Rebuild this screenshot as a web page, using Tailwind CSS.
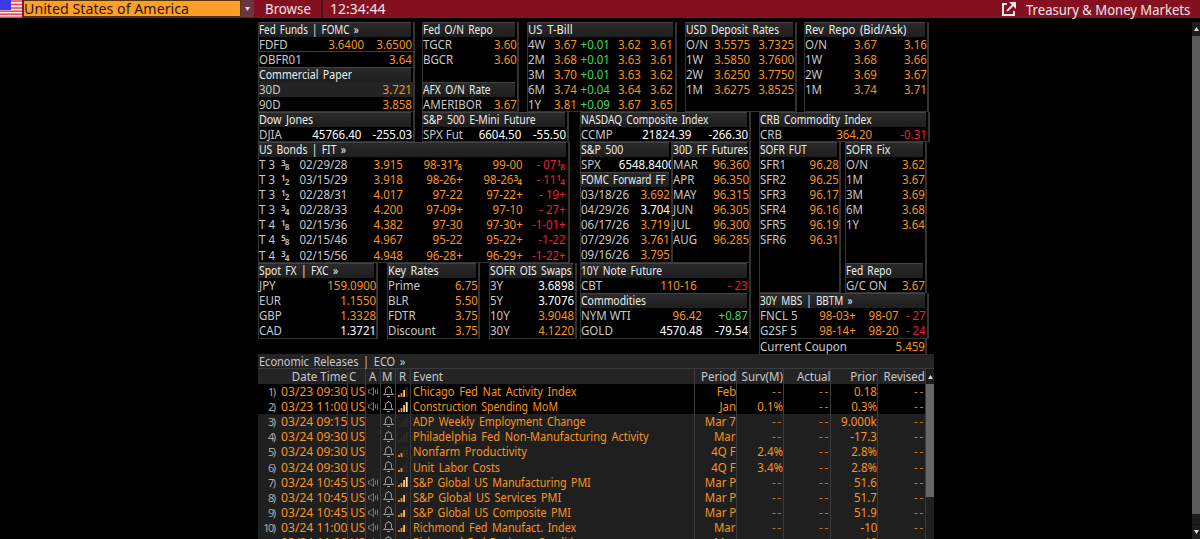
<!DOCTYPE html>
<html lang="en">
<head>
    <meta charset="UTF-8">
    <meta name="viewport" content="width=device-width, initial-scale=1.0">
    <title>Treasury &amp; Money Markets</title>
    <script src="https://cdn.jsdelivr.net/npm/@tailwindcss/browser@4"></script>
</head>
<body class="h-[539px] overflow-hidden bg-black font-['Noto_Sans','DejaVu_Sans',sans-serif] text-[12.5px] text-[#c9c9c9]">

    <!-- TOP BAR -->
    <header class="flex h-[18px] w-full items-stretch bg-[#85101f] text-[15px] leading-[17px] text-[#f0e4e6]">
        <svg class="h-[18px] w-[22px] shrink-0" viewBox="0 0 22 18" aria-hidden="true">
            <rect width="22" height="18" fill="#f3e3e3" />
            <path d="M0 1h22M0 4.5h22M0 8h22M0 11.2h22M0 14.2h22M0 17.2h22" stroke="#e0485a" stroke-width="1.4" />
            <rect width="11" height="10" fill="#3a3ae6" />
        </svg>
        <div class="ml-px flex h-[17px] w-[218px] shrink-0 items-center border border-[#5a3208] bg-[#ff9f29] text-[#2a1a04]">
            <span class="inline-block shrink-0 origin-left whitespace-nowrap" data-fit="165">United States of America</span>
        </div>
        <button class="flex h-[17px] w-[13px] shrink-0 items-center justify-center bg-[#6c3640]">
            <svg class="h-1 w-[5px]" viewBox="0 0 5 4"><path d="M0 0h5L2.500 4z" fill="#ddd" /></svg>
        </button>
        <div class="w-[69px] shrink-0 border-r-2 border-[#4d0a13] pl-[11px]"><span class="inline-block origin-left whitespace-nowrap" data-fit="46">Browse</span></div>
        <div class="pl-[7px]"><span class="inline-block origin-left whitespace-nowrap" data-fit="56">12:34:44</span></div>
        <div class="ml-auto flex w-[198px] shrink-0 items-center">
            <svg class="mr-[10px] h-[14px] w-[14px] shrink-0" viewBox="0 0 14 14" fill="none" stroke="#f0e4e6" stroke-width="2">
                <path d="M5 2H1v11h11V9" /><path d="M5 9l6-6" /><path d="M7 0h7v7z" fill="#f0e4e6" stroke="none" />
            </svg>
            <span class="inline-block shrink-0 origin-left whitespace-nowrap" data-fit="164">Treasury &amp; Money Markets</span>
        </div>
    </header>

    <div class="flex">
        <main class="ml-[258px] mt-1 w-[676px]">
            <!-- MONEY MARKET PANELS -->
            <div class="flex h-[90px]">
                <div class="mr-[7px] w-[157px]" id="fed-funds"></div>
                <div class="mr-2 w-[97px]" id="repo"></div>
                <div class="mr-2 w-[150px]" id="bills"></div>
                <div class="mr-[7px] w-[112px]" id="deposits"></div>
                <div class="w-[125px]" id="rev-repo"></div>
            </div>
            <div class="flex h-[242px]">
                <div class="mr-[3px] w-[319px]">
                    <div class="flex h-[30px]">
                        <div class="mr-[7px] w-[157px]" id="dow"></div>
                        <div class="w-[147px]" id="emini"></div>
                    </div>
                    <div class="h-[121px] w-[312px]" id="bonds"></div>
                    <div class="flex">
                        <div class="mr-[9px] w-[120px]" id="fx"></div>
                        <div class="mr-[9px] w-[93px]" id="key-rates"></div>
                        <div class="w-[88px]" id="swaps"></div>
                    </div>
                </div>
                <div class="mr-2 w-[171px]">
                    <div class="h-[30px]" id="nasdaq"></div>
                    <div class="flex h-[121px]">
                        <div class="w-[92px] overflow-hidden" id="spx"></div>
                        <div class="w-[79px]" id="futures"></div>
                    </div>
                    <div id="note"></div>
                </div>
                <div class="w-[171px]">
                    <div class="h-[30px]" id="crb"></div>
                    <div class="flex h-[151px]">
                        <div class="mr-[4px] w-[82px]" id="sofr-fut"></div>
                        <div class="w-[82px]" id="sofr-fix"></div>
                    </div>
                    <div class="w-[170px]" id="mbs"></div>
                    <div class="w-[168px]" id="coupon"></div>
                </div>
            </div>

            <!-- ECONOMIC RELEASES -->
            <section class="h-[185px] overflow-hidden bg-[#1f1f1f]">
                <div class="h-[15px] border-b border-[#3a3a3a] bg-[#242424] pl-px leading-[15px]"><span class="inline-block origin-left whitespace-nowrap [word-spacing:2px]" data-fit="146">Economic Releases | ECO »</span></div>
                <div class="flex">
                    <div class="w-[668px]" id="releases"></div>
                    <div class="w-2">
                        <div class="flex h-[15px] items-center justify-center bg-[#1c1c1c]"><svg class="h-1 w-[5px]" viewBox="0 0 5 4"><path d="M0 4h5L2.500 0z" fill="#ddd" /></svg></div>
                        <div class="h-[113px] bg-[#666]"></div>
                    </div>
                </div>
            </section>
        </main>

        <!-- PAGE SCROLLBAR -->
        <div class="ml-auto mt-1 h-[517px] w-2 bg-[#1c1c1c]">
            <div class="flex h-[14px] items-center justify-center"><svg class="h-1 w-[5px]" viewBox="0 0 5 4"><path d="M0 4h5L2.500 0z" fill="#ddd" /></svg></div>
            <div class="h-[478px] bg-[#5a5a5a]"></div>
            <div class="mt-[10px] flex h-[14px] items-center justify-center border-t border-[#111]"><svg class="h-1 w-[5px]" viewBox="0 0 5 4"><path d="M0 0h5L2.500 4z" fill="#ddd" /></svg></div>
        </div>
    </div>

    <script>
        const colors = { w: 'text-white', g: 'text-[#3fdc5c]', r: 'text-[#e8203c]', o: 'text-[#f7941d]', l: 'text-[#c9c9c9]' };

        // "3/8" in braces becomes a stacked fraction
        const frac = t => t.replace(/\{(\d)\/(\d)\}/g, '<span class="inline-block h-3 text-[9px] leading-none font-semibold"><span class="relative -top-[3px]">$1</span><span class="relative -left-px top-px">$2</span></span>');

        // text may start with a colour key, "r:-0.31"; w is the cell width in px
        const cell = (text, w, i) => {
            const m = /^([wgrol]):(.*)$/.exec(text);
            const color = colors[m ? m[1] : i ? 'o' : 'l'];
            const side = i ? 'justify-end' : 'justify-start';
            const origin = i ? 'origin-right' : 'origin-left';
            return `<div class="flex shrink-0 ${side} ${color}" style="width:${w}px"><span class="inline-block scale-x-92 whitespace-pre ${origin}">${frac(m ? m[2] : text)}</span></div>`;
        };
        const head = (t, fit) => `<div class="mr-[2px] h-[15px] border-t border-[#444] bg-linear-to-b from-[#2a2a2a] to-[#1e1e1e] leading-[14px] text-[#ececec]"><span class="inline-block origin-left whitespace-nowrap [word-spacing:2px]" data-fit="${fit}">${t}</span></div>`;
        const rows = (cols, list) => list.map(r => `<div class="flex h-[15.1px] leading-[15px]">${r.map((t, i) => cell(t, cols[i], i)).join('')}</div>`).join('');
        const put = (id, html, edge = 'border-r-2') => {
            const el = document.getElementById(id);
            el.innerHTML = `<div class="h-full border-b border-l ${edge} border-[#333]">${html}</div>`;
        };

        put('fed-funds', head('Fed Funds | FOMC »', 100) + rows([60, 45, 48], [['FDFD', '3.6400', '3.6500']])
            + '<div class="border-y border-[#3c3c3c] -mt-px -mb-px">' + rows([60, 93], [['OBFR01', '3.64']]) + '</div>'
            + head('Commercial Paper', 93) + '<div class="bg-[#232323]">' + rows([60, 93], [['30D', '3.721']]) + '</div>' + rows([60, 93], [['90D', '3.858']]));
        put('repo', head('Fed O/N Repo', 70) + rows([50, 44], [['TGCR', '3.60'], ['BGCR', '3.60'], ['', '']]) + head('AFX O/N Rate', 68) + rows([60, 34], [['AMERIBOR', '3.67']]));
        put('bills', head('US T-Bill', 45) + rows([20, 29, 32.5, 31.5, 32], [
            ['4W', '3.67', 'g:+0.01', '3.62', '3.61'], ['2M', '3.68', 'g:+0.01', '3.63', '3.61'], ['3M', '3.70', 'g:+0.01', '3.63', '3.62'],
            ['6M', '3.74', 'g:+0.04', '3.64', '3.62'], ['1Y', '3.81', 'g:+0.09', '3.67', '3.65']]));
        put('deposits', head('USD Deposit Rates', 93) + rows([24, 40, 44], [
            ['O/N', '3.5575', '3.7325'], ['1W', '3.5850', '3.7600'], ['2W', '3.6250', '3.7750'], ['1M', '3.6275', '3.8525']]));
        put('rev-repo', head('Rev Repo (Bid/Ask)', 101) + rows([24, 48, 50], [
            ['O/N', '3.67', '3.16'], ['1W', '3.68', '3.66'], ['2W', '3.69', '3.67'], ['1M', '3.74', '3.71']]));
        put('dow', head('Dow Jones', 54) + rows([40, 62, 51], [['DJIA', 'w:45766.40', 'w:-255.03']]));
        put('emini', head('S&amp;P 500 E-Mini Future', 113) + rows([45, 53, 45], [['SPX Fut', 'w:6604.50', 'w:-55.50']]));
        put('bonds', head('US Bonds | FIT »', 87) + rows([90, 54, 60, 60, 43], [
            ['T 3  {3/8}   02/29/28', '3.915', '98-31{7/8}', '99-00', 'r:- 07{1/8}'],
            ['T 3  {1/2}   03/15/29', '3.918', '98-26+', '98-26{3/4}', 'r:- 11{1/4}'],
            ['T 3  {1/2}   02/28/31', '4.017', '97-22', '97-22+', 'r:- 19+'],
            ['T 3  {3/4}   02/28/33', '4.200', '97-09+', '97-10', 'r:- 27+'],
            ['T 4  {1/8}   02/15/36', '4.382', '97-30', '97-30+', 'r:-1-01+'],
            ['T 4  {5/8}   02/15/46', '4.967', '95-22', '95-22+', 'r:-1-22'],
            ['T 4  {3/4}   02/15/56', '4.948', '96-28+', '96-29+', 'r:-1-22+']]));
        put('fx', head('Spot FX | FXC »', 79) + rows([40, 77], [['JPY', '159.0900'], ['EUR', '1.1550'], ['GBP', '1.3328'], ['CAD', 'w:1.3721']]));
        put('key-rates', head('Key Rates', 51) + rows([50, 40], [['Prime', '6.75'], ['BLR', '5.50'], ['FDTR', '3.75'], ['Discount', '3.75']]));
        put('swaps', head('SOFR OIS Swaps', 82) + rows([30, 54], [['3Y', 'w:3.6898'], ['5Y', 'w:3.7076'], ['10Y', '3.9048'], ['30Y', '4.1220']]));
        put('nasdaq', head('NASDAQ Composite Index', 127) + rows([40, 70, 57], [['CCMP', 'w:21824.39', 'w:-266.30']]));
        // the SPX price is wider than its panel and gets clipped
        put('spx', head('S&amp;P 500', 42) + '<div class="overflow-hidden">' + rows([34, 60], [['SPX', 'w:6548.8400']]) + '</div>' + head('FOMC Forward FF', 85)
            + rows([50, 39], [['03/18/26', '3.692'], ['04/29/26', 'w:3.704'], ['06/17/26', '3.719'], ['07/29/26', '3.761'], ['09/16/26', '3.795']]), 'border-r');
        put('futures', head('30D FF Futures', 75) + rows([30, 46], [['MAR', '96.360'], ['APR', '96.350'], ['MAY', '96.315'], ['JUN', '96.305'], ['JUL', '96.300'], ['AUG', '96.285']]));
        put('note', head('10Y Note Future', 81) + rows([40, 76, 51], [['CBT', '110-16', 'r:- 23']]) + head('Commodities', 65)
            + rows([50, 71, 46], [['NYM WTI', '96.42', 'g:+0.87'], ['GOLD', 'w:4570.48', 'w:-79.54']]));
        put('crb', head('CRB Commodity Index', 112) + rows([41, 71, 55], [['CRB', '364.20', 'r:-0.31']]));
        put('sofr-fut', head('SOFR FUT', 47) + rows([38, 41], [['SFR1', '96.28'], ['SFR2', '96.25'], ['SFR3', '96.17'], ['SFR4', '96.16'], ['SFR5', '96.19'], ['SFR6', '96.31']]));
        put('sofr-fix', head('SOFR Fix', 44) + rows([38, 41], [['O/N', '3.62'], ['1M', '3.67'], ['3M', '3.69'], ['6M', '3.68'], ['1Y', '3.64'], ['', ''], ['', '']])
            + head('Fed Repo', 46) + rows([44, 35], [['G/C ON', '3.67']]));
        put('mbs', head('30Y MBS | BBTM »', 93) + rows([47, 49, 43, 27], [['FNCL 5', '98-03+', '98-07', 'r:- 27'], ['G2SF 5', '98-14+', '98-20', 'r:- 24']]));
        put('coupon', rows([91, 74], [['Current Coupon', '5.459']]));

        // Economic calendar
        const horn = '<svg class="h-[9px] w-[11px]" viewBox="0 0 11 9" fill="none" stroke="#777"><path d="M.5 3v3h2l3 2.500v-8L2.500 3z" /><path d="M7.500 2.500v4M9.500 1.500v6" /></svg>';
        const bell = '<svg class="h-[12px] w-[11px]" viewBox="0 0 11 12" fill="none" stroke="#9a9a9a"><path d="M.5 8.500h10L8.500 7V4a3 3 0 0 0-6 0v3z" /><path d="M4 10.500h3M5.500 0v1" /></svg>';
        const bars = n => '<svg class="h-[10px] w-[10px]" viewBox="0 0 10 10">' + [2, 4, 7, 10].map((h, i) =>
            `<rect x="${i * 2.6}" y="${10 - h}" width="1.800" height="${h}" fill="${i < n ? ['#f7941d', '#f7941d', '#ffc069', '#ffe9c9'][i] : '#2a2a2a'}" />`).join('') + '</svg>';
        const widths = [90, 18, 15, 15, 15, 284, 42, 47, 47, 47, 48];
        const td = (html, i, extra) => `<div class="flex h-full shrink-0 items-center overflow-hidden border-r border-[#3c3c3c] ${extra}" style="width:${widths[i]}px">${html}</div>`;
        const sp = (t, o = 'origin-right') => `<span class="inline-block shrink-0 scale-x-92 whitespace-pre ${t === '--' ? 'tracking-[2px] text-[#c4791f]' : ''} ${o}">${t}</span>`;
        const titles = ['Date Time', 'C', 'A', 'M', 'R', 'Event', 'Period', 'Surv(M)', 'Actual', 'Prior', 'Revised'];
        const events = [
            ['03/23 09:30', 1, 3, 'Chicago Fed Nat Activity Index', 164, 'Feb', '--', '0.18'],
            ['03/23 11:00', 1, 4, 'Construction Spending MoM', 145, 'Jan', '0.1%', '0.3%'],
            ['03/24 09:15', 0, 0, 'ADP Weekly Employment Change', 173, 'Mar 7', '--', '9.000k'],
            ['03/24 09:30', 0, 0, 'Philadelphia Fed Non-Manufacturing Activity', 236, 'Mar', '--', '-17.3'],
            ['03/24 09:30', 0, 2, 'Nonfarm Productivity', 114, '4Q F', '2.4%', '2.8%'],
            ['03/24 09:30', 0, 2, 'Unit Labor Costs', 87, '4Q F', '3.4%', '2.8%'],
            ['03/24 10:45', 1, 4, 'S&amp;P Global US Manufacturing PMI', 178, 'Mar P', '--', '51.6'],
            ['03/24 10:45', 1, 3, 'S&amp;P Global US Services PMI', 148, 'Mar P', '--', '51.7'],
            ['03/24 10:45', 1, 3, 'S&amp;P Global US Composite PMI', 158, 'Mar P', '--', '51.9'],
            ['03/24 11:00', 1, 3, 'Richmond Fed Manufact. Index', 163, 'Mar', '--', '-10'],
            ['03/24 11:00', 1, 2, 'Richmond Fed Business Conditions', 178, 'Mar', '--', '-10']
        ];
        const right = 'justify-end';
        document.getElementById('releases').innerHTML =
            '<div class="flex h-[15px] bg-[#242424] leading-[15px]">' + titles.map((t, i) =>
                td(sp(t, i && i < 6 ? 'origin-left' : 'origin-right'), i, i === 0 || i > 5 ? right : i === 5 ? 'pl-0.5' : i === 1 ? 'pl-px' : 'justify-center')).join('') + '</div>'
            + events.map((e, n) => `<div class="flex h-[15.1px] leading-[15px] text-[#f7941d] ${n < 2 ? 'bg-black' : ''}">`
                + td(`<span class="mr-1 shrink-0 text-[11px] tracking-[-1.5px] text-[#aaa]">${n + 1})</span><span class="inline-block shrink-0 origin-right whitespace-nowrap" data-fit="66">${e[0]}</span>`, 0, right)
                + td(sp('US'), 1, right) + td(e[1] ? horn : '', 2, 'justify-center') + td(bell, 3, 'justify-center') + td(bars(e[2]), 4, 'justify-center')
                + td(`<span class="inline-block shrink-0 origin-left whitespace-nowrap [word-spacing:2px]" data-fit="${e[4]}">${e[3]}</span>`, 5, 'pl-0.5')
                + td(sp(e[5]), 6, right) + td(sp(e[6]), 7, right) + td(sp('--'), 8, right) + td(sp(e[7]), 9, right) + td(sp('--'), 10, right) + '</div>').join('');

        // squeeze or stretch labels to their set width
        const fit = () => document.querySelectorAll('[data-fit]').forEach(el => {
            el.style.transform = `scaleX(${el.dataset.fit / el.offsetWidth})`;
        });
        window.addEventListener('load', () => { fit(); requestAnimationFrame(fit); });
    </script>
</body>
</html>
